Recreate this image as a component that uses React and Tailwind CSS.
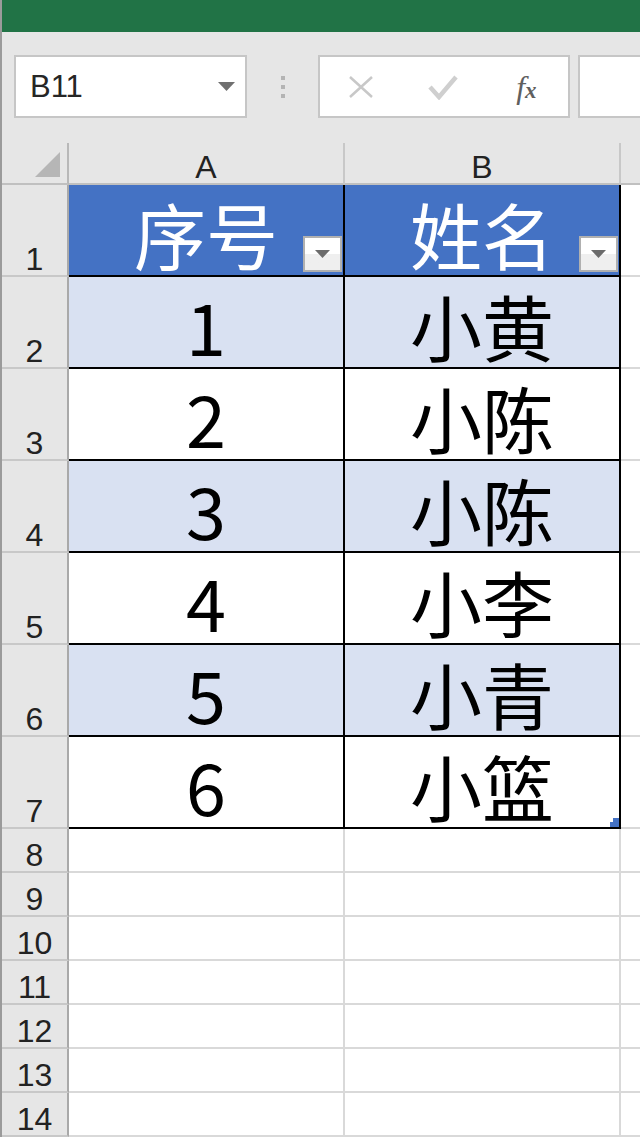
import React from "react";

const rows = [
  ["1", "小黄"],
  ["2", "小陈"],
  ["3", "小陈"],
  ["4", "小李"],
  ["5", "小青"],
  ["6", "小篮"],
];

function FilterButton() {
  return (
    <div className="absolute right-[1px] bottom-[3px] w-[39px] h-[36px] border-2 border-[#b0b0b0] bg-gradient-to-b from-white from-50% to-[#efefef] to-50% flex items-center justify-center">
      <svg width="15" height="8" viewBox="0 0 15 8">
        <polygon points="0,0 15,0 7.5,8" fill="#6b6b6b" />
      </svg>
    </div>
  );
}

function RowHead({ n, tall }) {
  return (
    <div
      className={`${tall ? "h-[92px]" : "h-[44px]"} bg-[#e6e6e6] border-r-2 border-b-2 border-r-[#a9a9a9] border-b-[#c8c8c8] flex items-end justify-center font-['Liberation_Sans',sans-serif] text-[32px] leading-none text-[#222]`}
    >
      {n}
    </div>
  );
}

export default function App() {
  return (
    <div className="w-[640px] h-[1137px] overflow-hidden bg-[#e6e6e6] border-l-2 border-[#9b9b9b] flex flex-col">
      {/* title bar */}
      <div className="h-[32px] bg-[#217346] shrink-0" />

      {/* name box + formula bar */}
      <div className="h-[111px] shrink-0 flex items-start pt-[23px] pl-[12px] overflow-hidden">
        <div className="w-[233px] h-[63px] shrink-0 bg-white border-2 border-[#c6c6c6] flex items-center justify-between pl-[14px] pr-[10px]">
          <span className="font-['Liberation_Sans',sans-serif] text-[31px] text-[#262626] leading-none">B11</span>
          <svg width="17" height="9" viewBox="0 0 17 9">
            <polygon points="0,0 17,0 8.5,9" fill="#707070" />
          </svg>
        </div>
        <div className="w-[71px] h-[63px] shrink-0 flex flex-col items-center justify-center gap-[5px]">
          <div className="w-[4px] h-[4px] bg-[#b4b4b4]" />
          <div className="w-[4px] h-[4px] bg-[#b4b4b4]" />
          <div className="w-[4px] h-[4px] bg-[#b4b4b4]" />
        </div>
        <div className="w-[252px] h-[63px] shrink-0 bg-white border-2 border-[#c6c6c6] flex items-center">
          <div className="w-[82px] flex justify-center">
            <svg width="26" height="22" viewBox="0 0 26 22">
              <path d="M2 1 L24 21 M24 1 L2 21" stroke="#c8c8c8" strokeWidth="2.5" />
            </svg>
          </div>
          <div className="w-[84px] flex justify-center">
            <svg width="32" height="26" viewBox="0 0 32 26">
              <polyline points="3,13 12,23 29,3" fill="none" stroke="#cfcfcf" strokeWidth="4.5" />
            </svg>
          </div>
          <div className="w-[84px] flex justify-center items-baseline font-['Liberation_Serif',serif] italic text-[#5f5f5f]">
            <span className="text-[32px] leading-none">f</span>
            <span className="text-[23px] leading-none font-bold">x</span>
          </div>
        </div>
        <div className="ml-[8px] w-[80px] h-[63px] shrink-0 bg-white border-2 border-[#c6c6c6]" />
      </div>

      {/* sheet */}
      <div className="grid grid-cols-[67px_276px_276px_1fr] bg-white">
        {/* column headers */}
        <div className="h-[42px] bg-[#e6e6e6] border-r-2 border-b-2 border-r-[#b8b8b8] border-b-[#c0c0c0] flex items-end justify-end pr-[7px] pb-[6px]">
          <svg width="25" height="25" viewBox="0 0 25 25">
            <polygon points="25,0 25,25 0,25" fill="#b6b6b6" />
          </svg>
        </div>
        <div className="h-[42px] bg-[#e6e6e6] border-r-2 border-b-2 border-r-[#c8c8c8] border-b-[#c0c0c0] flex items-end justify-center font-['Liberation_Sans',sans-serif] text-[32px] leading-none text-[#222]">
          A
        </div>
        <div className="h-[42px] bg-[#e6e6e6] border-r-2 border-b-2 border-r-[#c8c8c8] border-b-[#c0c0c0] flex items-end justify-center font-['Liberation_Sans',sans-serif] text-[32px] leading-none text-[#222]">
          B
        </div>
        <div className="h-[42px] bg-[#e6e6e6] border-b-2 border-b-[#c0c0c0]" />

        {/* table header row */}
        <RowHead n="1" tall />
        <div className="relative h-[92px] bg-[#4472c4] border-r-2 border-b-2 border-black flex items-end justify-center pb-[6px] font-['Noto_Sans_CJK_SC',sans-serif] text-[72px] leading-[72px] text-white">
          序号
          <FilterButton />
        </div>
        <div className="relative h-[92px] bg-[#4472c4] border-r-2 border-b-2 border-black flex items-end justify-center pb-[6px] font-['Noto_Sans_CJK_SC',sans-serif] text-[72px] leading-[72px] text-white">
          姓名
          <FilterButton />
        </div>
        <div className="h-[92px] border-b-2 border-[#d9d9d9]" />

        {/* data rows */}
        {rows.map(([no, name], i) => (
          <React.Fragment key={i}>
            <RowHead n={String(i + 2)} tall />
            <div
              className={`h-[92px] ${i % 2 === 0 ? "bg-[#d9e1f2]" : "bg-white"} border-r-2 border-b-2 border-black flex items-end justify-center pb-[6px] font-['Noto_Sans_CJK_SC',sans-serif] text-[72px] leading-[72px] text-black`}
            >
              {no}
            </div>
            <div
              className={`relative h-[92px] ${i % 2 === 0 ? "bg-[#d9e1f2]" : "bg-white"} border-r-2 border-b-2 border-black flex items-end justify-center pb-[6px] font-['Noto_Sans_CJK_SC',sans-serif] text-[72px] leading-[72px] text-black`}
            >
              {name}
              {i === rows.length - 1 && (
                <svg className="absolute right-0 bottom-0" width="9" height="9" viewBox="0 0 9 9">
                  <polygon points="3,0 9,0 9,9 0,9 0,4 3,4" fill="#4472c4" />
                </svg>
              )}
            </div>
            <div className="h-[92px] border-b-2 border-[#d9d9d9]" />
          </React.Fragment>
        ))}

        {/* empty rows */}
        {[8, 9, 10, 11, 12, 13, 14].map((n) => (
          <React.Fragment key={n}>
            <RowHead n={String(n)} />
            <div className="h-[44px] border-r-2 border-b-2 border-[#d9d9d9]" />
            <div className="h-[44px] border-r-2 border-b-2 border-[#d9d9d9]" />
            <div className="h-[44px] border-b-2 border-[#d9d9d9]" />
          </React.Fragment>
        ))}
      </div>
    </div>
  );
}
